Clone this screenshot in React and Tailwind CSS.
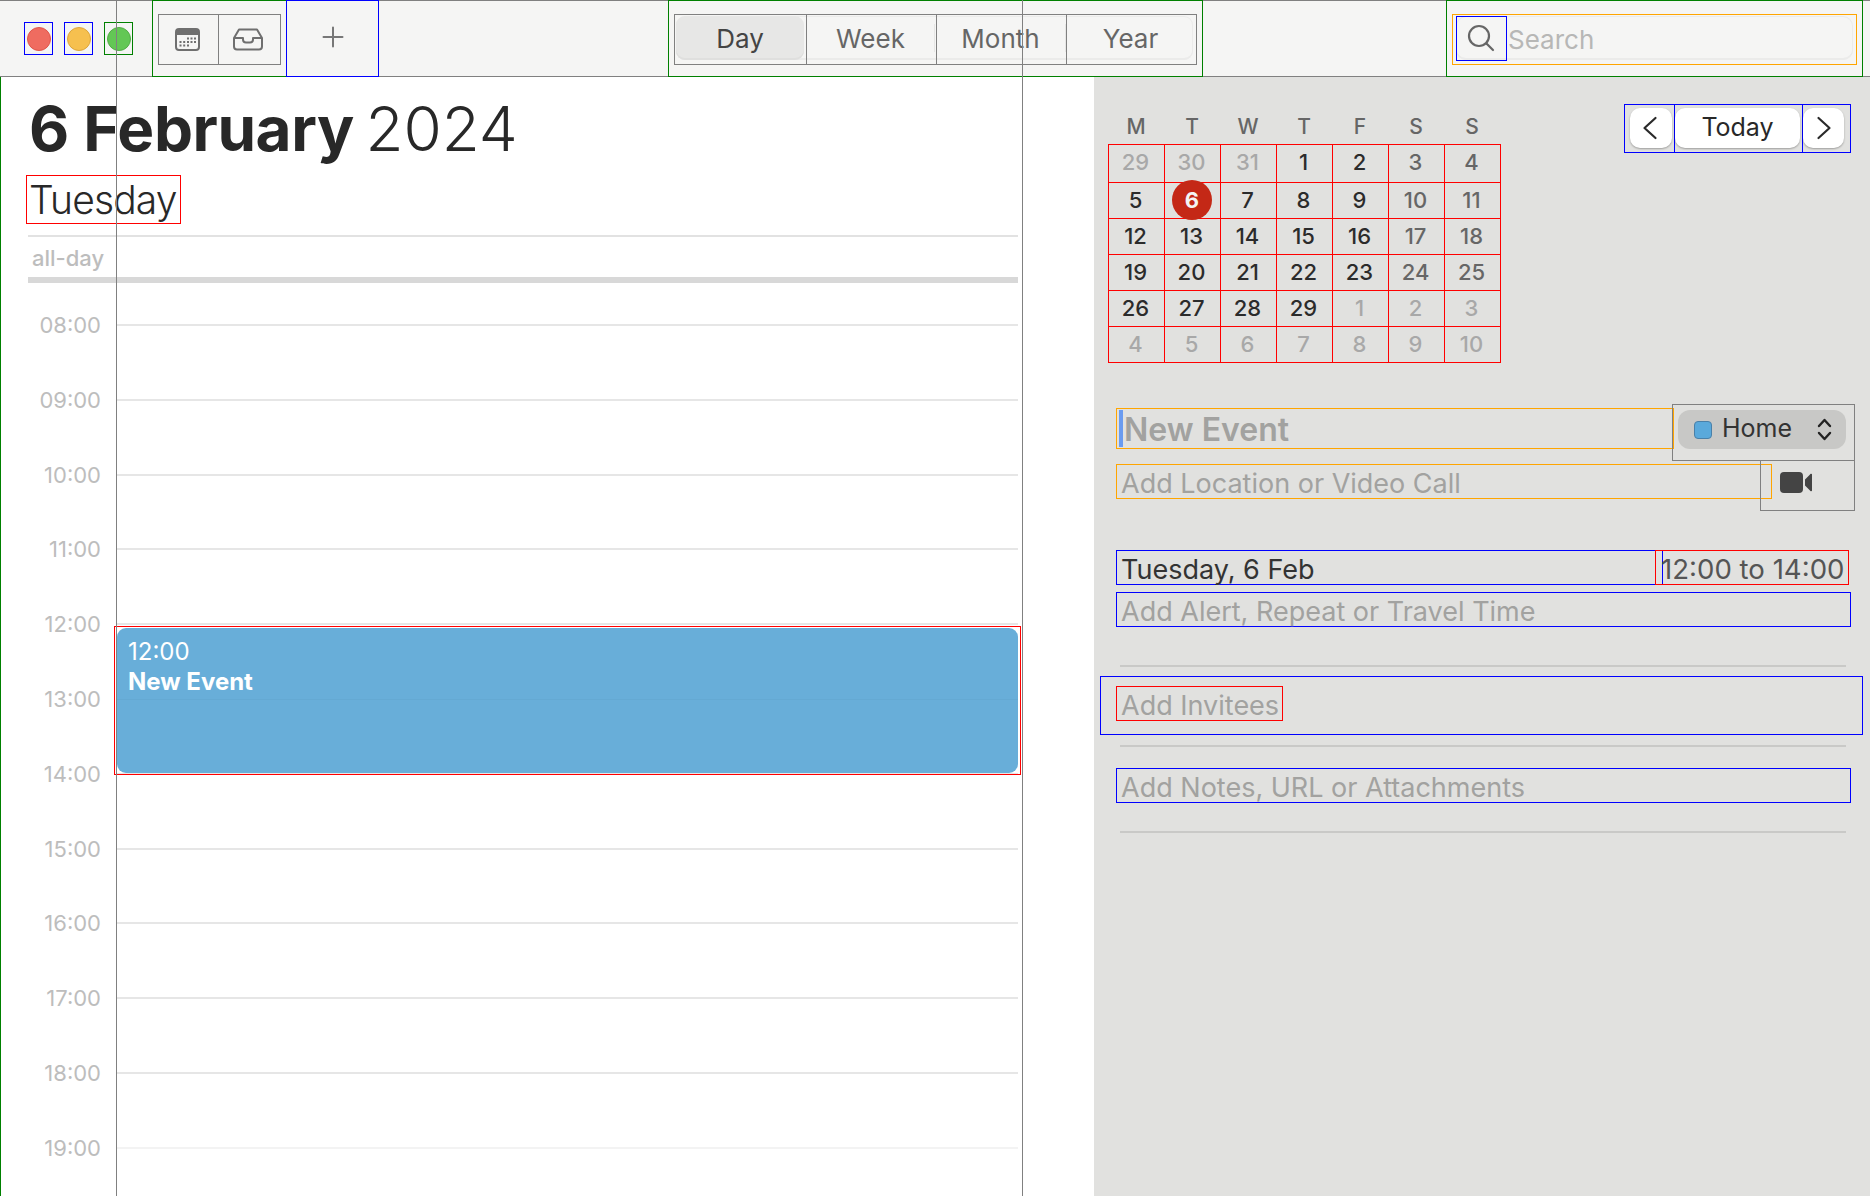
import React from 'react';

const hours = ['08:00', '09:00', '10:00', '11:00', '12:00', '13:00', '14:00', '15:00', '16:00', '17:00', '18:00', '19:00'];
const weekdays = ['M', 'T', 'W', 'T', 'F', 'S', 'S'];

const monthDays = [
  [['29', 'o'], ['30', 'o'], ['31', 'o'], ['1'], ['2'], ['3', 'w'], ['4', 'w']],
  [['5'], ['6', 't'], ['7'], ['8'], ['9'], ['10', 'w'], ['11', 'w']],
  [['12'], ['13'], ['14'], ['15'], ['16'], ['17', 'w'], ['18', 'w']],
  [['19'], ['20'], ['21'], ['22'], ['23'], ['24', 'w'], ['25', 'w']],
  [['26'], ['27'], ['28'], ['29'], ['1', 'o'], ['2', 'o'], ['3', 'o']],
  [['4', 'o'], ['5', 'o'], ['6', 'o'], ['7', 'o'], ['8', 'o'], ['9', 'o'], ['10', 'o']],
];

const CalendarIcon = () => (
  <svg width="27" height="25" viewBox="0 0 27 25" fill="none">
    <rect x="2" y="2" width="23" height="21" rx="3" stroke="#6f6f6f" strokeWidth="2" />
    <path d="M2 5a3 3 0 0 1 3-3h17a3 3 0 0 1 3 3v3H2z" fill="#6f6f6f" />
    <g fill="#6f6f6f">
      <rect x="13" y="10.5" width="2" height="2" />
      <rect x="16.5" y="10.5" width="2" height="2" />
      <rect x="20" y="10.5" width="2" height="2" />
      <rect x="5.5" y="14" width="2" height="2" />
      <rect x="9.2" y="14" width="2" height="2" />
      <rect x="13" y="14" width="2" height="2" />
      <rect x="16.5" y="14" width="2" height="2" />
      <rect x="20" y="14" width="2" height="2" />
      <rect x="5.5" y="17.5" width="2" height="2" />
      <rect x="9.2" y="17.5" width="2" height="2" />
      <rect x="13" y="17.5" width="2" height="2" />
    </g>
  </svg>
);

const InboxIcon = () => (
  <svg width="32" height="23" viewBox="0 0 32 23" fill="none" stroke="#6f6f6f" strokeWidth="2" strokeLinejoin="round">
    <path d="M7 1.5h18l5 8.5v8.5a3 3 0 0 1-3 3H5a3 3 0 0 1-3-3V10z" />
    <path d="M2 10h9v1.5a3 3 0 0 0 3 3h4a3 3 0 0 0 3-3V10h9" />
  </svg>
);

const Chevron = ({ left }) => (
  <svg width="16" height="24" viewBox="0 0 16 24" fill="none" stroke="#2a2a2a" strokeWidth="2.2" strokeLinecap="round" strokeLinejoin="round">
    <path d={left ? 'M13.5 2 2.5 12l11 10' : 'M2.5 2l11 10-11 10'} />
  </svg>
);

const Separator = () => <div className="ml-[26px] h-[2px] w-[726px] bg-[#c9c9c7]" />;

const Placeholder = ({ className, children }) => (
  <div className={`flex items-center pl-[4px] pt-[3px] text-[27px] leading-none text-[#a2a2a0] ${className}`}>{children}</div>
);

const App = () => {
  return (
    <div className="relative h-[1196px] w-[1870px] overflow-hidden bg-white [font-family:Inter,sans-serif]">
      {/* top bar */}
      <div className="box-border flex h-[77px] border-y border-[#808080] bg-[#f5f5f4] pl-[24px]">
        <div className="flex gap-[11px] pt-[21px]">
          <div className="flex h-[33px] w-[29px] items-center justify-center border border-[#0000ff]">
            <div className="h-[24px] w-[24px] rounded-full border border-[#e0564a] bg-[#ef6c60]" />
          </div>
          <div className="flex h-[33px] w-[29px] items-center justify-center border border-[#0000ff]">
            <div className="h-[24px] w-[24px] rounded-full border border-[#dda63c] bg-[#f6c04f]" />
          </div>
          <div className="flex h-[33px] w-[29px] items-center justify-center border border-[#008000]">
            <div className="h-[24px] w-[24px] rounded-full border border-[#53ad47] bg-[#63c755]" />
          </div>
        </div>

        <div className="-my-px ml-[19px] box-border w-[135px] border border-[#008000] pl-[5px] pt-[13px]">
          <div className="box-border flex h-[51px] w-[123px] border border-[#808080]">
            <div className="box-border flex w-[60px] items-center justify-center border-r border-[#808080] pr-[2px]">
              <CalendarIcon />
            </div>
            <div className="flex flex-1 items-center justify-center pr-[3px]">
              <InboxIcon />
            </div>
          </div>
        </div>

        <div className="-my-px -ml-px box-border flex w-[93px] items-center justify-center border border-[#0000ff] pb-[3px]">
          <svg width="22" height="22" viewBox="0 0 22 22" stroke="#777" strokeWidth="2" strokeLinecap="round">
            <path d="M11 1.5v19M1.5 11h19" />
          </svg>
        </div>

        <div className="-my-px ml-[289px] box-border w-[535px] border border-[#008000] pl-[5px] pt-[13px]">
          <div className="relative box-border flex h-[51px] w-[523px] border border-[#808080] text-[26px] text-[#666]">
            <div className="absolute left-[1px] top-[1px] h-[44px] w-[517px] rounded-[9px] shadow-[inset_0_-2px_0_#ebebea,inset_0_0_0_1px_#ebebea]" />
            <div className="absolute left-[259px] top-[9px] h-[28px] w-[1px] bg-[#e6e6e5]" />
            <div className="absolute left-[390px] top-[9px] h-[28px] w-[1px] bg-[#e6e6e5]" />
            <div className="relative box-border w-[132px] border-r border-[#808080] pl-[1px] pt-[1px]">
              <div className="flex h-[44px] w-[128px] items-center justify-center rounded-[9px] bg-[#e7e7e6] text-[#444] shadow-[inset_0_-2px_0_#dfdfde]">Day</div>
            </div>
            <div className="relative box-border flex w-[130px] items-center justify-center border-r border-[#808080] pb-[2px] pr-[2px]">Week</div>
            <div className="relative box-border flex w-[130px] items-center justify-center border-r border-[#808080] pb-[2px] pr-[2px]">Month</div>
            <div className="relative flex flex-1 items-center justify-center pb-[2px] pr-[2px]">Year</div>
          </div>
        </div>

        <div className="-my-px ml-[243px] box-border w-[417px] border border-[#008000] pl-[5px] pt-[13px]">
          <div className="box-border h-[51px] w-[405px] border border-[#ffa500] pl-[3px] pr-[3px] pt-[1px]">
            <div className="flex h-[44px] rounded-[10px] shadow-[inset_0_-2px_0_#ebebea,inset_0_0_0_1px_#ebebea]">
              <div className="box-border flex h-[45px] w-[51px] items-center justify-center border border-[#0000ff] pb-[2px] pr-[2px]">
                <svg width="30" height="30" viewBox="0 0 30 30" fill="none" stroke="#666" strokeWidth="2.2" strokeLinecap="round">
                  <circle cx="13" cy="13" r="10" />
                  <path d="M20.5 20.5 27 27" />
                </svg>
              </div>
              <div className="flex items-center pl-[1px] pt-[2px] text-[26px] text-[#b7b7b6]">Search</div>
            </div>
          </div>
        </div>
      </div>

      <div className="flex h-[1119px]">
        {/* day view */}
        <div className="box-border w-[1094px] border-l border-[#008000] pl-[27px]">
          <h1 className="ml-[1px] mt-[21px] whitespace-nowrap text-[62px] leading-[62px] text-[#282828]">
            <span className="font-bold tracking-[-0.4px]">6 February</span> <span className="-ml-[6px] font-light">2024</span>
          </h1>
          <div className="-ml-[2px] mt-[15px] box-border flex h-[49px] w-[155px] items-center border border-[#ff0000] pl-[2px] pt-[2px] text-[39px] font-light tracking-[-0.85px] text-[#282828]">
            Tuesday
          </div>
          <div className="mt-[11px] h-[2px] w-[990px] bg-[#e2e2e2]" />
          <div className="flex h-[40px] items-center pl-[4px] pt-[2px] text-[22px] font-medium text-[#bdbdbd]">all-day</div>
          <div className="h-[6px] w-[990px] bg-[#d8d8d8]" />
          <div className="pt-[41px]">
            {hours.map((hour) => (
              <div key={hour} className="flex h-[74.8px]">
                <div className="w-[88px] pr-[15px] text-right text-[22px] leading-none text-[#bdbdbd]">
                  <span className="block translate-y-[-10px]">{hour}</span>
                </div>
                <div className={`relative w-[902px] border-t-2 ${hour === '19:00' ? 'border-[#f3f3f3]' : 'border-[#e6e6e6]'}`}>
                  {hour === '12:00' && (
                    <div className="absolute -left-[2px] top-[1px] z-10 box-border h-[149px] w-[907px] border border-[#ff0000] px-[2px] py-[1px]">
                      <div className="relative h-[145px] rounded-[9px] bg-[#68aed9] pl-[11px] pt-[9px] text-[24px] leading-[30px] text-white">
                        <div className="absolute left-0 right-0 top-[71px] h-[1px] bg-[#64a9d3]" />
                        <div>12:00</div>
                        <div className="font-bold">New Event</div>
                      </div>
                    </div>
                  )}
                </div>
              </div>
            ))}
          </div>
        </div>

        {/* inspector */}
        <div className="flex-1 bg-[#e1e1df]">
          <div className="flex justify-between pl-[14px] pr-[19px]">
            <div>
              <div className="grid h-[67px] w-[392px] grid-cols-7 items-end pb-[7px] text-center text-[21px] font-medium leading-none text-[#666]">
                {weekdays.map((day, i) => (
                  <div key={i}>{day}</div>
                ))}
              </div>
              <div className="w-[393px] border-l border-t border-[#ff0000]">
                {monthDays.map((week, i) => (
                  <div key={i} className={`flex ${i === 0 ? 'h-[38px]' : 'h-[36px]'}`}>
                    {week.map(([num, kind], j) => (
                      <div
                        key={j}
                        className={`relative box-border flex w-[56px] items-center justify-center border-b border-r border-[#ff0000] pr-[2px] text-[22px] font-medium ${
                          i === 0 ? 'pb-[2px]' : ''
                        } ${kind === 'o' ? 'text-[#a8a8a8]' : kind === 'w' ? 'text-[#666]' : 'text-[#2b2b2b]'}`}
                      >
                        {kind === 't' ? (
                          <div className="absolute left-[7px] top-[-3px] flex h-[40px] w-[40px] items-center justify-center rounded-full bg-[#c42816] font-bold text-[#f4f4f4]">
                            {num}
                          </div>
                        ) : (
                          num
                        )}
                      </div>
                    ))}
                  </div>
                ))}
              </div>
            </div>

            <div className="mt-[27px] box-border flex h-[49px] w-[227px] border border-[#0000ff] text-[25px] text-[#282828]">
              <div className="box-border flex w-[50px] items-center border-r border-[#0000ff] pb-[1px] pl-[5px]">
                <div className="flex h-[40px] w-[42px] items-center justify-center rounded-[10px] bg-white pr-[3px] shadow-[0_1px_2px_rgba(0,0,0,0.3)]">
                  <Chevron left />
                </div>
              </div>
              <div className="box-border flex w-[128px] items-center border-r border-[#0000ff] pb-[1px]">
                <div className="flex h-[40px] w-[125px] items-center justify-center rounded-[10px] bg-white shadow-[0_1px_2px_rgba(0,0,0,0.3)]">Today</div>
              </div>
              <div className="flex flex-1 items-center pb-[1px]">
                <div className="flex h-[40px] w-[41px] items-center justify-center rounded-[10px] bg-white shadow-[0_1px_2px_rgba(0,0,0,0.3)]">
                  <Chevron />
                </div>
              </div>
            </div>
          </div>

          <div className="ml-[22px] mt-[41px] flex h-[56px] items-start">
            <div className="mt-[4px] box-border flex h-[41px] w-[558px] items-center border border-[#ffa500] pl-[2px]">
              <div className="h-[37px] w-[4px] bg-[#6a9bf0]" />
              <span className="pl-[1px] pt-[2px] text-[32px] font-semibold leading-none text-[#a2a2a0]">New Event</span>
            </div>
            <div className="-ml-[2px] box-border h-[57px] w-[183px] border border-[#808080] pl-[5px] pt-[5px]">
              <div className="flex h-[39px] w-[168px] items-center rounded-[12px] bg-[#c8c8c6] pl-[16px] text-[25px] text-[#333]">
                <div className="h-[18px] w-[18px] rounded-[4px] border border-[#4a80a8] bg-[#5aa9db]" />
                <span className="mb-[1px] ml-[10px]">Home</span>
                <svg className="ml-[24px]" width="17" height="23" viewBox="0 0 17 23" fill="none" stroke="#222" strokeWidth="2.4" strokeLinecap="round" strokeLinejoin="round">
                  <path d="M3 8 8.5 2 14 8M3 15l5.5 6 5.5-6" />
                </svg>
              </div>
            </div>
          </div>

          <div className="ml-[22px] flex items-start">
            <Placeholder className="mt-[4px] box-border h-[35px] w-[656px] border border-[#ffa500]">Add Location or Video Call</Placeholder>
            <div className="-ml-[12px] box-border flex h-[51px] w-[95px] items-start border border-[#808080] pl-[19px] pt-[11px]">
              <svg width="32" height="21" viewBox="0 0 32 21" fill="#444">
                <rect x="0" y="0" width="23" height="21" rx="4" />
                <path d="M25 7.5 30 2.5a1 1 0 0 1 2 .5v15a1 1 0 0 1-2 .5l-5-5z" />
              </svg>
            </div>
          </div>

          <div className="ml-[22px] mt-[39px] flex h-[35px]">
            <div className="box-border flex w-[547px] items-center border border-[#0000ff] pl-[4px] pt-[3px] text-[27px] leading-none text-[#333]">Tuesday, 6 Feb</div>
            <div className="-ml-[8px] box-border flex w-[194px] items-center border border-[#ff0000] pl-[5px] pt-[4px] text-[27.6px] leading-none text-[#555]">12:00 to 14:00</div>
          </div>

          <Placeholder className="ml-[22px] mt-[7px] box-border h-[35px] w-[735px] border border-[#0000ff]">Add Alert, Repeat or Travel Time</Placeholder>

          <div className="mt-[38px]">
            <Separator />
          </div>

          <div className="ml-[6px] mt-[9px] box-border h-[59px] w-[763px] border border-[#0000ff] pl-[15px] pt-[9px]">
            <Placeholder className="box-border h-[35px] w-[167px] border border-[#ff0000]">Add Invitees</Placeholder>
          </div>

          <div className="mt-[10px]">
            <Separator />
          </div>

          <Placeholder className="ml-[22px] mt-[21px] box-border h-[35px] w-[735px] border border-[#0000ff]">Add Notes, URL or Attachments</Placeholder>

          <div className="mt-[28px]">
            <Separator />
          </div>
        </div>
      </div>

      {/* guide lines over everything */}
      <div className="absolute bottom-0 left-[116px] top-0 z-20 w-px bg-[#808080]" />
      <div className="absolute bottom-0 left-[1022px] top-0 z-20 w-px bg-[#808080]" />
    </div>
  );
};

export default App;
